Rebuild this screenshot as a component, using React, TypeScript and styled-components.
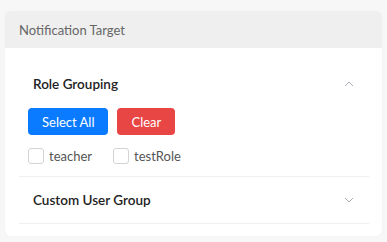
import React, { useState } from "react"
import styled, { createGlobalStyle } from "styled-components"

const GlobalStyle = createGlobalStyle`
    html, body {
        margin: 0;
        padding: 0;
        background: #f7f7f7;
        font-family: Lato, "Noto Sans", sans-serif;
    }
`

interface ChevronProps {
    up: boolean
}
const Chevron = ({ up }: ChevronProps) => (
    <svg width="12" height="12" viewBox="0 0 12 12">
        <path d={up ? "M2 8 L6 4 L10 8" : "M2 4 L6 8 L10 4"} fill="none" stroke="#a8adb5" strokeWidth="1" />
    </svg>
)

const roles = ["teacher", "testRole"]

const App = () => {
    const [openRoles, setOpenRoles] = useState(true)
    const [openCustom, setOpenCustom] = useState(false)
    const [checked, setChecked] = useState<string[]>([])

    const toggle = (role: string) => {
        setChecked(checked.includes(role) ? checked.filter((r) => r !== role) : [...checked, role])
    }

    return (
        <>
            <GlobalStyle />
            <Page>
                <Card>
                    <CardHeader>Notification Target</CardHeader>
                    <CardBody>
                        <Section>
                            <SectionHead onClick={() => setOpenRoles(!openRoles)}>
                                <SectionTitle>Role Grouping</SectionTitle>
                                <Chevron up={openRoles} />
                            </SectionHead>
                            {openRoles && (
                                <SectionContent>
                                    <Buttons>
                                        <Button variant="primary" onClick={() => setChecked(roles)}>
                                            Select All
                                        </Button>
                                        <Button variant="danger" onClick={() => setChecked([])}>
                                            Clear
                                        </Button>
                                    </Buttons>
                                    <Checks>
                                        {roles.map((role) => (
                                            <CheckLabel key={role}>
                                                <CheckBox type="checkbox" checked={checked.includes(role)} onChange={() => toggle(role)} />
                                                {role}
                                            </CheckLabel>
                                        ))}
                                    </Checks>
                                </SectionContent>
                            )}
                        </Section>
                        <Section>
                            <SectionHead onClick={() => setOpenCustom(!openCustom)}>
                                <SectionTitle>Custom User Group</SectionTitle>
                                <Chevron up={openCustom} />
                            </SectionHead>
                        </Section>
                    </CardBody>
                </Card>
            </Page>
        </>
    )
}

const Page = styled.div`
    padding: 11px 5px 6px 5px;
`

const Card = styled.div`
    background: #fff;
    border-radius: 6px;
    overflow: hidden;
    box-shadow: 0 0 2px rgba(0, 0, 0, 0.04);
`

const CardHeader = styled.div`
    height: 37px;
    display: flex;
    align-items: center;
    padding: 0 14px;
    background: #efefef;
    color: #666;
    font-size: 13px;
`

const CardBody = styled.div`
    padding: 13px 13px 12px 14px;
`

const Section = styled.div`
    border-bottom: 1px solid #f0f0f0;
`

const SectionHead = styled.div`
    height: 46px;
    display: flex;
    align-items: center;
    justify-content: space-between;
    padding: 0 14px;
    cursor: pointer;
`

const SectionTitle = styled.div`
    font-size: 13.5px;
    font-weight: 600;
    color: #222;
`

const SectionContent = styled.div`
    padding: 1px 9px 12px 9px;
`

const Buttons = styled.div`
    display: flex;
    gap: 9px;
`

const Button = styled.button<{ variant: "primary" | "danger" }>`
    height: 27px;
    padding: 0 14px;
    border: none;
    border-radius: 4px;
    background: ${(p) => (p.variant === "primary" ? "#0a7bff" : "#e84545")};
    color: #fff;
    font-family: inherit;
    font-size: 13px;
    cursor: pointer;
`

const Checks = styled.div`
    display: flex;
    gap: 21px;
    margin-top: 13px;
`

const CheckLabel = styled.label`
    display: flex;
    align-items: center;
    gap: 5px;
    font-size: 13px;
    color: #555;
`

const CheckBox = styled.input`
    appearance: none;
    margin: 0;
    width: 16px;
    height: 16px;
    border: 1px solid #d4d4d4;
    border-radius: 3px;
    background: #fff;
    &:checked {
        background: #0a7bff;
        border-color: #0a7bff;
    }
`

export default App
